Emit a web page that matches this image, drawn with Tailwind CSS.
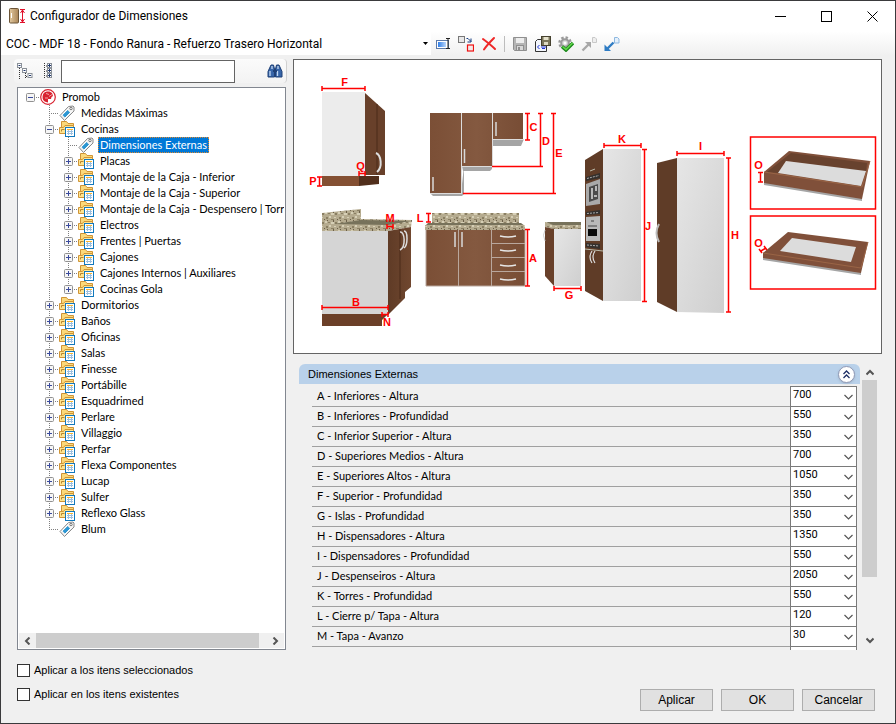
<!DOCTYPE html>
<html lang="es">
<head>
  <meta charset="UTF-8">
  <meta name="viewport" content="width=device-width, initial-scale=1.0">
  <title>Configurador de Dimensiones</title>
  <script src="https://cdn.jsdelivr.net/npm/@tailwindcss/browser@4"></script>
</head>
<body class="h-screen overflow-hidden bg-[#f0f0f0] text-black font-['Liberation_Sans',sans-serif] text-[11px]">

  <!-- Icons -->
  <svg class="hidden">
    <symbol id="plus" viewBox="0 0 9 9">
      <rect x=".5" y=".5" width="8" height="8" rx="1" fill="#f6f6f6" stroke="#919191"/>
      <path d="M2 4.500h5M4.500 2v5" stroke="#3a4a9c"/>
    </symbol>
    <symbol id="minus" viewBox="0 0 9 9">
      <rect x=".5" y=".5" width="8" height="8" rx="1" fill="#f6f6f6" stroke="#919191"/>
      <path d="M2 4.500h5" stroke="#3a4a9c"/>
    </symbol>
    <symbol id="folder" viewBox="0 0 16 16">
      <path d="M2.500 12.500v-12h5l1.500 2h5.500v10z" fill="#fbd97a" stroke="#cf9436"/>
      <path d="M.5 12.500v-6h4l1.500-2h8.500v8z" fill="#ffe48f" stroke="#cf9436"/>
      <path d="M2.500 10.500v-2h3" stroke="#b9852f" fill="none"/>
      <rect x="6.500" y="6.500" width="9" height="9" fill="#fff" stroke="#1279bd"/>
      <path d="M8 8.500h6" stroke="#f9b62f"/>
      <path d="M8 10.500h6M8 12.500h6M9.500 9v5M12.500 9v5" stroke="#9cc0e0"/>
    </symbol>
    <symbol id="tag" viewBox="0 0 16 16">
      <path d="M1 10.500L9.500 1.500l4.500-.5 1 1v4l-9.500 9.500z" fill="#f2f2f2" stroke="#8a8a8a"/>
      <path d="M5 11.500L10 6.500" stroke="#2c96d2" stroke-width="4"/>
      <path d="M2.500 10.500L9 4M5.500 13.500l7-7" stroke="#fff"/>
      <circle cx="12" cy="3.500" r="1.200" fill="#fff" stroke="#777"/>
    </symbol>
    <symbol id="promob" viewBox="0 0 16 16">
      <circle cx="8" cy="8" r="7.300" fill="#fff" stroke="#d8222f" stroke-width="1.200"/>
      <path d="M7 2.500a5.500 5.500 0 0 0-1 10.500l2 .5V10h3l.5-2 1.500-1-1-3-2.500-1.500z" fill="#d8222f"/>
      <path d="M6 4.500l3 1M9 7.500l3-2M5 9h3" stroke="#f2a1a6" fill="none"/>
    </symbol>
  </svg>

  <div class="flex h-full flex-col border border-[#3a3a3c]">

    <!-- Title bar -->
    <header class="flex h-[30px] shrink-0 items-center bg-white pl-2">
      <svg class="h-4 w-4" viewBox="0 0 16 16">
        <defs><linearGradient id="door"><stop offset="0" stop-color="#e2c9a0"/><stop offset="1" stop-color="#a98557"/></linearGradient></defs>
        <rect x=".5" y=".5" width="9" height="14.500" rx="1" fill="url(#door)" stroke="#6b5437"/>
        <path d="M2.500 5v5" stroke="#fff"/>
        <path d="M11 1.500h5M11 14.500h5M13.500 2v12M11.500 5l2-3 2 3M11.500 11l2 3 2-3" stroke="#e0102a" fill="none"/>
      </svg>
      <h1 class="ml-[5px] flex-1 font-['Roboto',sans-serif] text-[12px]">Configurador de Dimensiones</h1>
      <button aria-label="Minimizar" class="flex h-full w-[46px] items-center justify-center"><svg class="h-[11px] w-[11px]" viewBox="0 0 11 11"><path d="M0 5.500h11" stroke="#000"/></svg></button>
      <button aria-label="Maximizar" class="flex h-full w-[46px] items-center justify-center"><svg class="h-[11px] w-[11px]" viewBox="0 0 11 11"><rect x=".5" y=".5" width="10" height="10" fill="none" stroke="#000"/></svg></button>
      <button aria-label="Cerrar" class="flex h-full w-[46px] items-center justify-center"><svg class="h-[11px] w-[11px]" viewBox="0 0 11 11"><path d="M.5.5l10 10M10.500.5l-10 10" stroke="#000"/></svg></button>
    </header>

    <!-- Toolbar -->
    <div class="flex h-[25px] shrink-0 items-center bg-linear-to-b from-white to-[#f0f0f0]">
      <div class="relative h-[23px] w-[430px] bg-white">
        <select aria-label="Configuración" class="h-full w-full appearance-none pl-[5px] font-['Roboto',sans-serif] text-[12px] outline-none">
          <option>COC - MDF 18 - Fondo Ranura - Refuerzo Trasero Horizontal</option>
        </select>
        <svg class="pointer-events-none absolute top-[10px] right-[3px] h-[3px] w-[5px]" viewBox="0 0 5 3"><path d="M0 0h5L2.500 3z"/></svg>
      </div>
      <div class="flex items-center gap-[7px] pl-1">
        <button aria-label="Renombrar"><svg class="block h-4 w-4" viewBox="0 0 16 16">
          <defs><linearGradient id="bl"><stop offset="0" stop-color="#2f7ee8"/><stop offset="1" stop-color="#b9d6fb"/></linearGradient></defs>
          <rect x="1.500" y="4.500" width="12" height="8" fill="#fff" stroke="#5d7aa8"/><rect x="3" y="6" width="8" height="5" fill="url(#bl)"/>
          <path d="M11 2.500h4M11 12.500h4M13 3v9" stroke="#222"/></svg></button>
        <button aria-label="Reemplazar"><svg class="block h-4 w-4" viewBox="0 0 16 16">
          <rect x=".5" y=".5" width="6" height="6" fill="#e8e8e8" stroke="#777"/><rect x="9.500" y="9" width="6" height="6" fill="#f4e9e9" stroke="#e11" stroke-width="1.200"/>
          <path d="M8.500 2.500h1.500l3 3M13 2.500v3.500h-3.500" stroke="#123a80" fill="none"/></svg></button>
        <button aria-label="Eliminar"><svg class="block h-4 w-4" viewBox="0 0 16 16"><path d="M2 3c4 3 8 6 12 10M13 2C9 6 6 9 3 13.500" stroke="#ef2828" stroke-width="2" stroke-linecap="round"/></svg></button>
        <span class="h-4 w-px bg-[#bdbdbd]"></span>
        <button aria-label="Guardar"><svg class="block h-4 w-4" viewBox="0 0 16 16">
          <path d="M1.500 1.500h13v13h-12l-1-1z" fill="#b5b5b5" stroke="#8f8f8f"/><rect x="4" y="2" width="8" height="5" fill="#ededed"/><rect x="4.500" y="9.500" width="7" height="5" fill="#d8d8d8" stroke="#8f8f8f"/><rect x="6" y="11" width="2" height="3" fill="#8f8f8f"/></svg></button>
        <button aria-label="Guardar como"><svg class="block h-4 w-4" viewBox="0 0 16 16">
          <path d="M.5 15.500v-10l2-2h9v12z" fill="#f3f6fc" stroke="#333"/><path d="M4.500 9L2.500 11l2 2M6 11h5M7 9.500h3M7 12.500h3" stroke="#1c33d6" fill="none"/>
          <rect x="6.500" y=".5" width="9" height="9" fill="#7b765a" stroke="#45412f"/><rect x="8.500" y="1" width="5" height="3" fill="#e6e2cc"/><rect x="9" y="6" width="4" height="3" fill="#dedac2"/></svg></button>
        <button aria-label="Aplicar configuración"><svg class="block h-4 w-4" viewBox="0 0 16 16">
          <circle cx="7" cy="7" r="5.500" fill="none" stroke="#9a9a9a" stroke-width="2.500" stroke-dasharray="2.400 1.900"/><circle cx="7" cy="7" r="3.800" fill="#d5d5d5" stroke="#9a9a9a" stroke-width="2"/>
          <circle cx="7" cy="7" r="1.500" fill="#fff"/><path d="M4 10.500l4 3.500 7-7" stroke="#1c8a1c" stroke-width="3.500" fill="none"/><path d="M4.500 10.500L8 13.500l6.500-6.500" stroke="#65d84c" stroke-width="1.500" fill="none"/></svg></button>
        <button aria-label="Exportar"><svg class="block h-4 w-4" viewBox="0 0 16 16"><path d="M1.500 14.500l6-6" stroke="#a8a8a8" stroke-width="2.400"/><path d="M4 6h6v6z" fill="#a8a8a8"/><path d="M11.500 1.500h2.500l1.500 1.500v3.500h-4z" fill="#eee" stroke="#c8c8c8"/></svg></button>
        <button aria-label="Importar"><svg class="block h-4 w-4" viewBox="0 0 16 16"><path d="M3 13l6.500-6.500" stroke="#2f7cc4" stroke-width="2.400"/><path d="M.5 8.500v6.500H7z" fill="#2f7cc4"/><path d="M10.500 1.500h3l1.500 1.500v4h-4.500z" fill="#e5f0fb" stroke="#8db8e0"/></svg></button>
      </div>
    </div>

    <main class="flex min-h-0 flex-1 gap-[6px] pt-[3px] pr-[13px] pl-[13px]">

      <!-- Left panel -->
      <section class="flex w-[273px] shrink-0 flex-col">
        <div class="flex h-[24px] items-center rounded-sm border-r border-[#d0d0d0] bg-linear-to-b from-[#fbfbfb] to-[#f3f3f3] pr-[3px] pl-[3px]">
          <button aria-label="Contraer todo"><svg class="block h-4 w-4" viewBox="0 0 16 16">
            <path d="M2.500 5v11M8.500 10v6M5 8.500h1M9 13.500h2" stroke="#333" stroke-dasharray="1 1"/>
            <g fill="#fff" stroke="#8a9098"><rect x=".5" y=".5" width="4" height="4"/><rect x="5.500" y="5.500" width="4" height="4"/><rect x="11" y="10.500" width="4" height="4"/></g>
            <path d="M1.500 2.500h2M6.500 7.500h2M12 12.500h2" stroke="#223a70"/></svg></button>
          <button aria-label="Expandir todo" class="ml-[9px]"><svg class="block h-4 w-4" viewBox="0 0 16 16">
            <path d="M2.500 0v16M4 3h2M4 8h2M4 13h2" stroke="#333" stroke-dasharray="1 1"/>
            <g fill="#fff" stroke="#8a9098"><rect x="5.500" y=".5" width="4" height="4"/><rect x="5.500" y="5.500" width="4" height="4"/><rect x="5.500" y="10.500" width="4" height="4"/></g>
            <path d="M6 2.500h3M6 7.500h3M6 12.500h3M7.500 1v3M7.500 6v3M7.500 11v3" stroke="#223a70"/></svg></button>
          <input type="text" aria-label="Buscar" class="ml-[3px] h-[23px] w-[174px] border border-[#646464] bg-white px-1 outline-none">
          <button aria-label="Buscar" class="ml-auto"><svg class="block h-4 w-4" viewBox="0 0 16 16">
            <path d="M4 2h2.500L7.500 6v8H1V8.500zM9.500 2H12l3 6.500V14H8.500V6z" fill="#3765a8" stroke="#1f4076"/>
            <path d="M3 8v5M10.500 8v5M5 3v3M11 3v3" stroke="#c2d8f2" stroke-width="1.300"/><path d="M6 8h4" stroke="#1f4076" stroke-width="2"/></svg></button>
        </div>
        <div class="mt-1 ml-[3px] flex h-[563px] w-[269px] flex-col border border-[#828790] bg-white p-px">
          <ul id="tree" class="flex-1 overflow-hidden pl-[2px] font-['Lato',sans-serif]"></ul>
          <div class="flex h-[15px] shrink-0 items-center bg-[#f0f0f0] px-[5px]">
            <svg class="h-[8px] w-[7px]" viewBox="0 0 7 8"><path d="M5.500.5L2 4l3.500 3.500" stroke="#555" stroke-width="2" fill="none"/></svg>
            <div class="ml-[5px] h-full w-[223px] bg-[#cdcdcd]"></div>
            <svg class="ml-auto h-[8px] w-[7px]" viewBox="0 0 7 8"><path d="M1.500.5L5 4 1.500 7.500" stroke="#555" stroke-width="2" fill="none"/></svg>
          </div>
        </div>
        <div class="mt-[14px] ml-[3px] flex flex-col gap-[11px]">
          <label class="flex h-[13px] items-center gap-1"><input type="checkbox" class="h-[13px] w-[13px] appearance-none border border-[#333] bg-white">Aplicar a los itens seleccionados</label>
          <label class="flex h-[13px] items-center gap-1"><input type="checkbox" class="h-[13px] w-[13px] appearance-none border border-[#333] bg-white">Aplicar en los itens existentes</label>
        </div>
      </section>

      <!-- Right panel -->
      <section class="flex min-w-0 flex-1 flex-col">
        <div class="border border-[#646464] bg-white">
          <svg class="block w-full" viewBox="294 60 587 293" role="img" aria-label="Dimensiones de los muebles">
            <defs>
              <linearGradient id="wood"><stop offset="0" stop-color="#7b4f36"/><stop offset=".5" stop-color="#845940"/><stop offset="1" stop-color="#784d35"/></linearGradient>
              <linearGradient id="dark"><stop offset="0" stop-color="#5f3b26"/><stop offset="1" stop-color="#70472f"/></linearGradient>
              <linearGradient id="pale" x2="1" y2="1"><stop offset="0" stop-color="#e6e6e6"/><stop offset="1" stop-color="#cfcfcf"/></linearGradient>
              <pattern id="granite" width="13" height="9" patternUnits="userSpaceOnUse">
                <rect width="13" height="9" fill="#b5ab8f"/>
                <path d="M1 1h2v2h-2zM6 3h3v1h-3zM10 6h2v2h-2zM3 6h2v1h-2z" fill="#8a7f63"/>
                <path d="M4 0h2v2h-2zM9 1h2v1h-2zM0 5h2v2h-2zM6 6h3v2h-3z" fill="#d6cfb6"/>
                <path d="M8 4h1v2h-1zM2 4h1v1h-1zM12 3h1v1h-1z" fill="#6b5f49"/>
              </pattern>
            </defs>

            <!-- Superior, vista lateral -->
            <path d="M322 92h43v84h-43z" fill="#ececec"/>
            <path d="M365 93l20 18v64h-20z" fill="#68402a"/>
            <path d="M377 104v71" stroke="#4b2b19"/>
            <path d="M322 176h37v10h-37z" fill="#845033"/>
            <path d="M359 176h20v8l-20 2z" fill="#512f1c"/>
            <path d="M376 153c5 2 7 14 1 19" stroke="#ddd" stroke-width="2" fill="none"/>

            <!-- Inferior, vista lateral -->
            <path d="M322 213l39-4v10l51 1-1 7-23 4h-66z" fill="url(#granite)"/>
            <path d="M334 224l27-4 50 1-23 4z" fill="#77725b"/>
            <path d="M322 231h66v83h-66z" fill="#d5d5d5"/>
            <path d="M388 231l23-4v60l-6 5v6l-17 17z" fill="url(#dark)"/>
            <path d="M400 229v70" stroke="#4b2b19"/>
            <path d="M322 314h66l-6 6v6h-60z" fill="#6b3f28"/>
            <path d="M400 232c5-1 6 15 0 18M404 231c4 0 4 14 0 17" stroke="#ddd" fill="none" stroke-width="1.500"/>

            <!-- Superiores, vista frontal -->
            <path d="M430 193h31l3-27v28l-2 2h-29zM462 166h30v3l-2 2h-27zM493 139h31l-3 7h-28z" fill="#a5a5a5"/>
            <path d="M430 113h31v80h-31zM462 113h30v53h-30zM493 113h30v26h-30z" fill="url(#wood)"/>
            <path d="M461.500 113v81M492.500 113v54M430 193.500h31M462 166.500h30M493 139.500h31" stroke="#dcdcdc"/>
            <path d="M433 177v14M464.500 149v14M496 122v14" stroke="#d9d9d9" stroke-width="1.500"/>

            <!-- Inferiores, vista frontal -->
            <path d="M432 213h87v11h-87z" fill="url(#granite)"/>
            <path d="M428 223h93l4 3h-100z" fill="#77725b"/>
            <path d="M425 225h100v5h-100z" fill="url(#granite)"/>
            <path d="M426 230h99v56h-99z" fill="url(#wood)"/>
            <path d="M426 230v56h99v-56M458.500 230v56M491.500 230v56M492 243.500h33M492 257.500h33M492 271.500h33" stroke="#b9a79d" fill="none"/>
            <path d="M455 232v15M462 232v15" stroke="#d9d9d9" stroke-width="1.500"/>
            <path d="M500 236q8 2 16 0M500 250q8 2 16 0M500 265q8 2 16 0M500 279q8 2 16 0" stroke="#e6e6e6" stroke-width="1.500" fill="none"/>

            <!-- Isla -->
            <path d="M545 222h36v7h-27l-9-2z" fill="url(#granite)"/>
            <path d="M546 222h35v3h-28z" fill="#77725b"/>
            <path d="M545 227l9 2v57l-9-10z" fill="#68402a"/>
            <path d="M554 229h27v57h-27z" fill="url(#pale)"/>
            <path d="M545 230q-3 5 0 11" stroke="#ccc" fill="none"/>

            <!-- Torre -->
            <path d="M585 160l18-11v152l-18-10z" fill="#5f3c27"/>
            <path d="M603 149h38v152h-38z" fill="url(#pale)"/>
            <path d="M586 177l14-4v5l-14 3zM586 212l14-2v4l-14 1zM586 243l14 1v5l-14-2z" fill="#34302d"/>
            <path d="M587 178.500l12-3M587 213.500l12-1M587 245l12 1" stroke="#aaa" stroke-dasharray="2 1"/>
            <path d="M586 184l14-5v25l-14 2z" fill="#a9a9a9"/>
            <path d="M589 187l9-3v15l-9 3z" fill="#4b4b4b"/>
            <path d="M592 188v11M596 186v5M594 196h3" stroke="#ddd" stroke-width="1.500"/>
            <path d="M586 217l14-1v25h-14z" fill="#b9b9b9"/>
            <path d="M588 229h9v7h-9z" fill="#090909"/>
            <path d="M591 221h3M588 226h9" stroke="#444"/>
            <path d="M585 249l18 2M590 171l5-2" stroke="#bba"/>
            <path d="M592 251q-4 6 0 12M595 251q-4 6 0 12" stroke="#ddd" stroke-width="1.200" fill="none"/>

            <!-- Despensero -->
            <path d="M657 163l20-5v154l-20-10z" fill="#5f3c27"/>
            <path d="M677 158h47v155l-47-1z" fill="url(#pale)"/>
            <path d="M659 224q-5 9 0 18" stroke="#bbb" stroke-width="2" fill="none"/>

            <!-- Tapa, altura -->
            <path d="M764 182l98 14v5l-98-16z" fill="#a5a5a5"/>
            <path d="M789 151l81 10-8 38-98-16v-11z" fill="#80503a"/>
            <path d="M791 153l76 10-1 9-80-11-8 12-11-1z" fill="#68422e"/>
            <path d="M786 161l80 10-5 15-83-13z" fill="#dcdcdc"/>
            <path d="M764 172l98 15 8-26" stroke="#9a6546" fill="none"/>

            <!-- Tapa, ancho -->
            <path d="M763 257l98 15v3l-98-15z" fill="#a5a5a5"/>
            <path d="M788 232l80 10-7 31-98-15v-5z" fill="#80503a"/>
            <path d="M763 253l98 15 7-26" stroke="#9a6546" fill="none"/>
            <path d="M792 238l64 9-5 15-71-11z" fill="#dcdcdc"/>

            <!-- Cotas -->
            <g stroke="#f00" stroke-width="1.500" fill="none">
              <path d="M322 88.500h43M322 86v5M365 86v5M359 173.500h6M359 171v5M365 171v5M319.500 177v9M317 177h5M317 186h5"/>
              <path d="M322 307.500h66M322 305v5M388 305v5M382 314.500h6M382 312v5M388 312v5M387 226.500h6M387 224v5M393 224v5"/>
              <path d="M527.500 113v27M525 113.500h5M525 140h5M540.500 113v54M538 113.500h5M492 166.500h51M553.500 113v81M551 113.500h5M463 193.500h93"/>
              <path d="M527.500 230v56M525 229.500h5M525 286h5M428.500 213v9M426 213.500h5M426 222h5M554 288.500h27M554 286v5M581 286v5"/>
              <path d="M604 145.500h37M604 143v5M641 143v5M644.500 149v152M642 149.500h5M642 301.500h5"/>
              <path d="M677 153.500h47M677 151v5M724 151v5M728.500 158v154M726 158h5M726 312h5"/>
              <path d="M760.500 172v10M758 172.500h5M758 182h5M761 251l5-3M759 249l3 4M764 246l3 4"/>
              <path d="M750.500 137h125v72h-125zM750.500 216h125v73h-125z"/>
            </g>
            <g fill="#f00" font-family="Liberation Sans, sans-serif" font-weight="bold" font-size="11" text-anchor="middle">
              <text x="344.500" y="86">F</text><text x="360.500" y="170">Q</text><text x="313" y="185">P</text>
              <text x="356" y="306">B</text><text x="387" y="326">N</text><text x="390" y="222">M</text>
              <text x="533.500" y="131">C</text><text x="546" y="145">D</text><text x="559" y="157">E</text>
              <text x="533" y="262">A</text><text x="420" y="222">L</text><text x="569" y="299">G</text>
              <text x="622" y="143">K</text><text x="648" y="230">J</text><text x="700.500" y="150">I</text><text x="735" y="239">H</text>
              <text x="758.500" y="169">O</text><text x="758.500" y="247">O</text>
            </g>
          </svg>
        </div>

        <!-- Dimension list -->
        <div class="mt-[9px] mr-[5px] ml-[6px] flex h-[287px] gap-[2px]">
          <div class="min-w-0 flex-1 overflow-hidden">
            <div class="mt-px mb-[2px] flex h-[20px] items-center justify-between rounded-t-md bg-[#b9d1ea] pr-[5px] pl-[9px]">
              <h2>Dimensiones Externas</h2>
              <button aria-label="Contraer" class="flex h-[17px] w-[17px] items-center justify-center rounded-full border border-[#8f98b5] bg-white shadow">
                <svg class="h-[9px] w-[7px]" viewBox="0 0 7 9"><path d="M.5 4l3-3 3 3M.5 8l3-3 3 3" stroke="#1e2f66" stroke-width="1.300" fill="none"/></svg>
              </button>
            </div>
            <div id="dims" class="mr-[3px] ml-[13px] border-t border-transparent font-['Lato',sans-serif]"></div>
          </div>
          <div class="flex w-[15px] flex-col items-center bg-[#f0f0f0] py-[6px]">
            <svg class="h-[7px] w-[8px]" viewBox="0 0 8 7"><path d="M.5 5.500L4 2l3.500 3.500" stroke="#555" stroke-width="2" fill="none"/></svg>
            <div class="mt-[4px] h-[197px] w-full bg-[#cdcdcd]"></div>
            <svg class="mt-auto h-[7px] w-[8px]" viewBox="0 0 8 7"><path d="M.5 1.500L4 5l3.500-3.500" stroke="#555" stroke-width="2" fill="none"/></svg>
          </div>
        </div>

        <!-- Actions -->
        <div class="mt-[39px] mr-[7px] flex justify-end gap-2 text-[12px]">
          <button class="h-[22px] w-[73px] border border-[#adadad] bg-[#e1e1e1]">Aplicar</button>
          <button class="h-[22px] w-[73px] border border-[#adadad] bg-[#e1e1e1]">OK</button>
          <button class="h-[22px] w-[73px] border border-[#adadad] bg-[#e1e1e1]">Cancelar</button>
        </div>
      </section>
    </main>
  </div>

  <script>
    // [level, icon, label]
    var nodes = [
      [0, 'promob', 'Promob'],
      [1, 'tag', 'Medidas Máximas'],
      [1, 'folder', 'Cocinas'],
      [2, 'tag', 'Dimensiones Externas'],
      [2, 'folder', 'Placas'],
      [2, 'folder', 'Montaje de la Caja - Inferior'],
      [2, 'folder', 'Montaje de la Caja - Superior'],
      [2, 'folder', 'Montaje de la Caja - Despensero | Torre'],
      [2, 'folder', 'Electros'],
      [2, 'folder', 'Frentes | Puertas'],
      [2, 'folder', 'Cajones'],
      [2, 'folder', 'Cajones Internos | Auxiliares'],
      [2, 'folder', 'Cocinas Gola'],
      [1, 'folder', 'Dormitorios'],
      [1, 'folder', 'Baños'],
      [1, 'folder', 'Oficinas'],
      [1, 'folder', 'Salas'],
      [1, 'folder', 'Finesse'],
      [1, 'folder', 'Portábille'],
      [1, 'folder', 'Esquadrimed'],
      [1, 'folder', 'Perlare'],
      [1, 'folder', 'Villaggio'],
      [1, 'folder', 'Perfar'],
      [1, 'folder', 'Flexa Componentes'],
      [1, 'folder', 'Lucap'],
      [1, 'folder', 'Sulfer'],
      [1, 'folder', 'Reflexo Glass'],
      [1, 'tag', 'Blum']
    ];
    var selected = 'Dimensiones Externas';

    function cell(path, box) {
      return '<svg class="h-4 w-[19px] shrink-0" viewBox="0 0 19 16"><path d="' + path + '" stroke="#808080" stroke-dasharray="1 1"/>' +
        (box ? '<use href="#' + box + '" x="5" y="4" width="9" height="9"/>' : '') + '</svg>';
    }

    document.getElementById('tree').innerHTML = nodes.map(function (node, i) {
      var level = node[0];
      var next = nodes[i + 1];
      var last = !next || next[0] < level;
      var box = node[1] === 'tag' ? '' : (level === 0 || node[2] === 'Cocinas' ? 'minus' : 'plus');
      var cells = '';
      for (var l = 0; l < level; l++) {
        cells += cell(l === 0 ? '' : 'M9.5 0v16', '');
      }
      cells += cell(level === 0 ? 'M9 8.5h10' : (last ? 'M9.5 0v8M9 8.5h10' : 'M9.5 0v16M9 8.5h10'), box);
      var style = node[2] === selected
        ? 'bg-[#0078d7] text-white outline-1 -outline-offset-1 outline-dotted outline-[#e08a30]'
        : '';
      return '<li class="flex h-4 items-center whitespace-nowrap">' + cells +
        '<svg class="h-4 w-4 shrink-0"><use href="#' + node[1] + '"/></svg>' +
        '<span class="ml-1 px-[2px] leading-4 ' + style + '">' + node[2] + '</span></li>';
    }).join('');

    var dims = [
      ['A - Inferiores - Altura', 700],
      ['B - Inferiores - Profundidad', 550],
      ['C - Inferior Superior - Altura', 350],
      ['D - Superiores Medios - Altura', 700],
      ['E - Superiores Altos - Altura', 1050],
      ['F - Superior - Profundidad', 350],
      ['G - Islas - Profundidad', 350],
      ['H - Dispensadores - Altura', 1350],
      ['I - Dispensadores - Profundidad', 550],
      ['J - Despenseiros - Altura', 2050],
      ['K - Torres - Profundidad', 550],
      ['L - Cierre p/ Tapa - Altura', 120],
      ['M - Tapa - Avanzo', 30],
      ['', '']
    ];
    document.getElementById('dims').innerHTML = dims.map(function (d, i) {
      return '<div class="flex h-5">' +
        '<label for="dim' + i + '" class="flex flex-1 items-center border-b border-[#a0a0a0] pl-[5px]">' + d[0] + '</label>' +
        '<div class="relative -mt-px h-[21px] w-[67px]">' +
        '<select id="dim' + i + '" class="h-full w-full appearance-none border border-[#7a7a7a] bg-white pb-[2px] pl-[2px] font-[\'Roboto\',sans-serif] text-[11px] outline-none"><option>' + d[1] + '</option></select>' +
        '<svg class="pointer-events-none absolute top-[8px] right-[4px] h-[6px] w-[9px]" viewBox="0 0 9 6"><path d="M.5 1l4 4 4-4" stroke="#555" stroke-width="1.200" fill="none"/></svg>' +
        '</div></div>';
    }).join('');
  </script>
</body>
</html>
